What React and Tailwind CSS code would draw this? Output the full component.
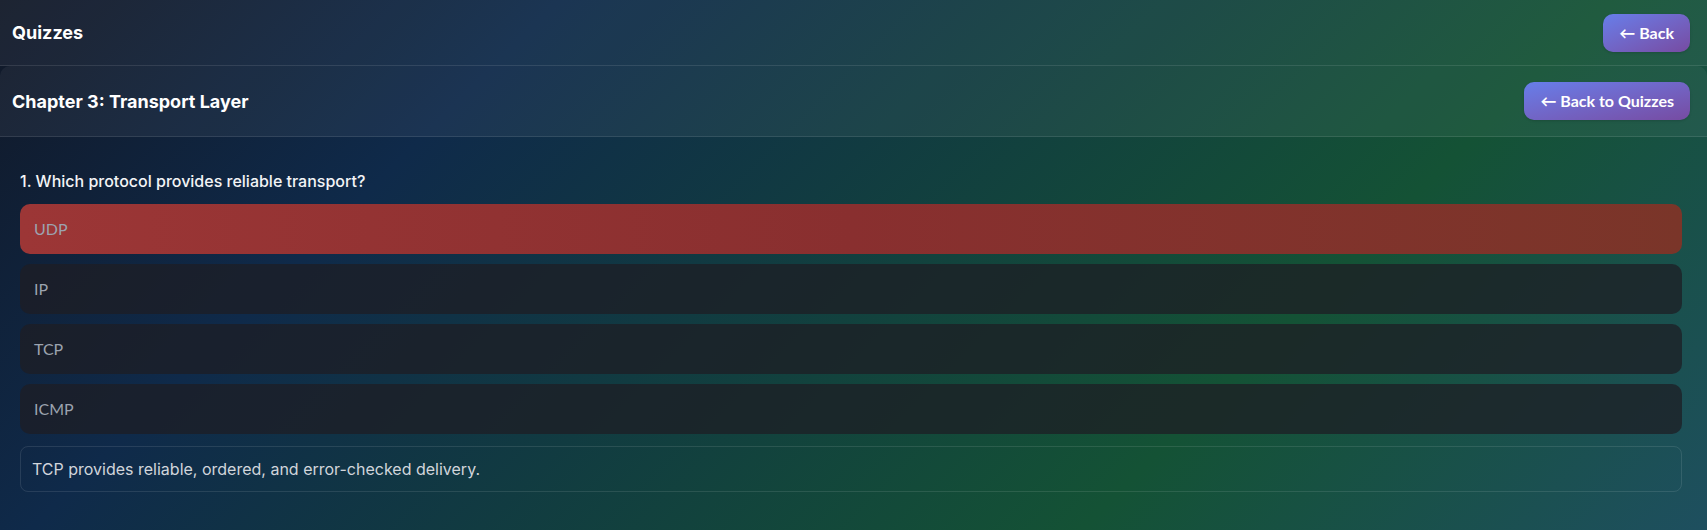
const options = ['UDP', 'IP', 'TCP', 'ICMP'];

function BackButton({ children }) {
  return (
    <button className="h-[38px] px-4 rounded-[10px] bg-gradient-to-br from-[#667eea] to-[#764ba2] text-white font-bold text-[16px] font-['Lato',sans-serif] shadow-sm">
      {children}
    </button>
  );
}

export default function App() {
  return (
    <div className="min-h-screen h-[530px] bg-[linear-gradient(135deg,#111827_0%,#0f2a4a_25%,#145235_72%,#1e4f5f_100%)] font-['Inter',sans-serif] overflow-hidden">
      <div className="h-[66px] flex items-center justify-between pl-3 pr-[17px] bg-white/5 border-b border-white/10">
        <h1 className="text-white text-[18px] font-bold">Quizzes</h1>
        <BackButton>← Back</BackButton>
      </div>

      <div className="h-[71px] flex items-center justify-between pl-3 pr-[17px] bg-white/5 border-b border-white/10 rounded-t-[10px]">
        <h2 className="text-white text-[18px] font-bold">Chapter 3: Transport Layer</h2>
        <BackButton>← Back to Quizzes</BackButton>
      </div>

      <div className="pl-5 pr-[25px] pt-[34px]">
        <p className="text-gray-100 text-[16px] font-medium leading-5 mb-[13px]">
          1. Which protocol provides reliable transport?
        </p>
        <div className="flex flex-col gap-[10px]">
          {options.map((opt, i) => (
            <div
              key={opt}
              className={
                i === 0
                  ? 'h-[50px] rounded-[10px] flex items-center px-[14px] bg-gradient-to-r from-[#9c3636] via-[#892f2f] to-[#7a3529]'
                  : 'h-[50px] rounded-[10px] flex items-center px-[14px] bg-[#1e1e24]/75'
              }
            >
              <span className="text-[#9ca3af] text-[16px] font-['Lato',sans-serif]">{opt}</span>
            </div>
          ))}
        </div>
        <div className="mt-[12px] h-[46px] rounded-lg border border-white/10 flex items-center px-[11px]">
          <span className="text-[#d1d5db] text-[16px]">
            TCP provides reliable, ordered, and error-checked delivery.
          </span>
        </div>
      </div>
    </div>
  );
}
